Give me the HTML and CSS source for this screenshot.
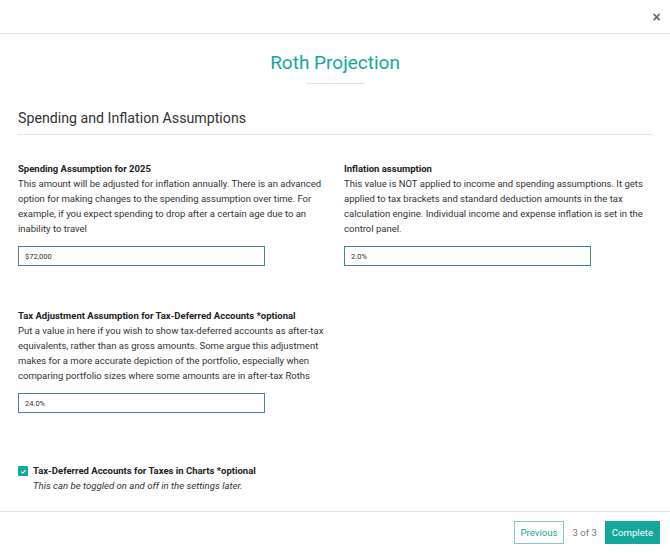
FILE: index.html
```html
<!DOCTYPE html>
<html lang="en">
<head>
  <meta charset="UTF-8">
  <title>Roth Projection</title>
  <link rel="stylesheet" href="styles.css">
</head>
<body>
  <div class="modal">

    <!-- Header -->
    <div class="modal-header">
      <button class="close-btn">&times;</button>
    </div>

    <!-- Body -->
    <div class="modal-body">
      <div class="title">Roth Projection</div>
      <div class="title-rule"></div>

      <div class="section-title">Spending and Inflation Assumptions</div>

      <div class="fields">
        <div class="field">
          <div class="field-label">Spending Assumption for 2025</div>
          <div class="field-help">This amount will be adjusted for inflation annually. There is an advanced option for making changes to the spending assumption over time. For example, if you expect spending to drop after a certain age due to an inability to travel</div>
          <input type="text" class="field-input" value="$72,000">
        </div>

        <div class="field">
          <div class="field-label">Inflation assumption</div>
          <div class="field-help">This value is NOT applied to income and spending assumptions. It gets applied to tax brackets and standard deduction amounts in the tax calculation engine. Individual income and expense inflation is set in the control panel.</div>
          <input type="text" class="field-input" value="2.0%">
        </div>

        <div class="field">
          <div class="field-label">Tax Adjustment Assumption for Tax-Deferred Accounts *optional</div>
          <div class="field-help">Put a value in here if you wish to show tax-deferred accounts as after-tax equivalents, rather than as gross amounts. Some argue this adjustment makes for a more accurate depiction of the portfolio, especially when comparing portfolio sizes where some amounts are in after-tax Roths</div>
          <input type="text" class="field-input" value="24.0%">
        </div>
      </div>

      <div class="check-row">
        <span class="check-box">
          <svg width="7" height="7" viewBox="0 0 7 7"><path d="M1.4 3.7 L2.9 5 L5.6 2" fill="none" stroke="#fff" stroke-width="1.1"/></svg>
        </span>
        <div>
          <div class="check-label">Tax-Deferred Accounts for Taxes in Charts *optional</div>
          <div class="check-note">This can be toggled on and off in the settings later.</div>
        </div>
      </div>
    </div>

    <!-- Footer -->
    <div class="modal-footer">
      <button class="btn btn-outline">Previous</button>
      <span class="step">3 of 3</span>
      <button class="btn btn-fill">Complete</button>
    </div>

  </div>
</body>
</html>
```

FILE: styles.css
```css
body {
  margin: 0;
  background: #fff;
  color: #333;
  font-family: Roboto, "Noto Sans", sans-serif;
}

.modal {
  width: 670px;
}

.modal-header {
  height: 33px;
  border-bottom: 1px solid #e5e5e5;
  display: flex;
  justify-content: flex-end;
  align-items: center;
  padding-right: 9px;
}

.close-btn {
  background: none;
  border: none;
  color: #666;
  font-size: 14px;
  font-weight: bold;
  font-family: Arial, sans-serif;
  padding: 0;
  width: 9px;
  cursor: pointer;
}

.modal-body {
  padding: 0 18px;
}

.title {
  text-align: center;
  color: #14a89a;
  font-size: 19px;
  line-height: 24px;
  padding-top: 17px;
}

.title-rule {
  width: 58px;
  height: 1px;
  background: #e3e3e3;
  margin: 8px auto 0;
}

.section-title {
  font-size: 14.2px;
  line-height: 20px;
  color: #333;
  margin-top: 24px;
  padding-bottom: 6px;
  border-bottom: 1px solid #e5e5e5;
}

.fields {
  display: grid;
  grid-template-columns: 1fr 1fr;
  column-gap: 10px;
  row-gap: 42px;
  margin-top: 26px;
}

.field:nth-child(2) {
  padding-left: 4px;
}

.field-label {
  font-size: 9.5px;
  font-weight: bold;
  line-height: 15px;
  color: #222;
}

.field-help {
  font-size: 9.5px;
  line-height: 15px;
  color: #333;
}

.field-input {
  display: block;
  box-sizing: border-box;
  width: 247px;
  height: 20px;
  margin-top: 10px;
  padding: 0 6px;
  border: 1px solid #4b8297;
  font-family: Roboto, sans-serif;
  font-size: 7.5px;
  color: #333;
}

.check-row {
  display: flex;
  gap: 5px;
  margin-top: 50px;
}

.check-box {
  width: 10px;
  height: 10px;
  background: #14a89a;
  border-radius: 1px;
  margin-top: 3px;
  display: flex;
  align-items: center;
  justify-content: center;
}

.check-label {
  font-size: 9.5px;
  font-weight: bold;
  line-height: 15px;
  color: #222;
}

.check-note {
  font-size: 9.6px;
  font-style: italic;
  line-height: 15px;
  color: #333;
}

.modal-footer {
  margin-top: 18px;
  border-top: 1px solid #e5e5e5;
  display: flex;
  justify-content: flex-end;
  align-items: center;
  gap: 8px;
  padding: 9px 10px 0 0;
}

.btn {
  height: 23px;
  font-family: Roboto, sans-serif;
  font-size: 9.6px;
  padding: 0 6px;
  cursor: pointer;
}

.btn-outline {
  background: #fff;
  color: #14a89a;
  border: 1px solid #7fcfc6;
}

.btn-fill {
  background: #14a89a;
  color: #fff;
  border: 1px solid #14a89a;
}

.step {
  font-size: 9.6px;
  color: #777;
}
```
